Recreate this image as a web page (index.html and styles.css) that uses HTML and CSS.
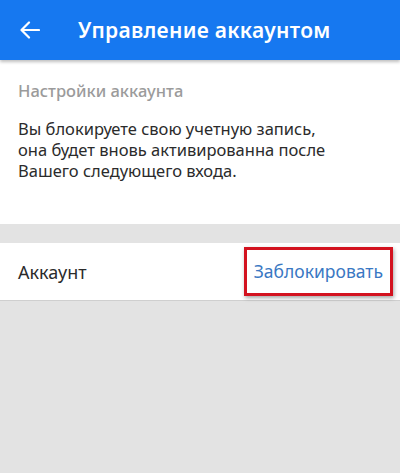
FILE: index.html
```html
<!DOCTYPE html>
<html lang="ru">
<head>
  <meta charset="UTF-8" />
  <meta name="viewport" content="width=device-width, initial-scale=1.0" />
  <title>Управление аккаунтом</title>
  <link rel="stylesheet" href="styles.css">
</head>
<body>
  <header class="topbar">
    <svg class="back" width="20" height="18" viewBox="0 0 20 18">
      <path d="M19 9H2M9 1.5L1.5 9L9 16.5" fill="none" stroke="#fff" stroke-width="2.2" stroke-linecap="round" stroke-linejoin="round"/>
    </svg>
    <h1>Управление аккаунтом</h1>
  </header>

  <section class="settings">
    <h2>Настройки аккаунта</h2>
    <p>Вы блокируете свою учетную запись,<br />она будет вновь активированна после<br />Вашего следующего входа.</p>
  </section>

  <div class="row">
    <span class="label">Аккаунт</span>
    <a class="action" href="#">Заблокировать</a>
  </div>
</body>
</html>
```

FILE: styles.css
```css
body {
  margin: 0;
  height: 473px;
  background: #e3e3e3;
  font-family: "Noto Sans", sans-serif;
  overflow: hidden;
}
.topbar {
  height: 60px;
  background: #1678f0;
  display: flex;
  align-items: center;
  padding-left: 20px;
  box-shadow: 0 2px 3px rgba(0, 0, 0, 0.25);
  position: relative;
}
.back {
  flex: none;
}
.topbar h1 {
  margin: 0 0 0 38px;
  color: white;
  font-size: 21px;
  font-weight: 600;
  letter-spacing: 0.3px;
}
.settings {
  background: white;
  padding: 19px 18px 40px;
  height: 164px;
  box-sizing: border-box;
}
.settings h2 {
  margin: 0;
  font-size: 16.5px;
  font-weight: 500;
  color: #9b9b9b;
}
.settings p {
  margin: 16px 0 0;
  font-size: 16.5px;
  line-height: 21px;
  color: #2b2b2b;
}
.row {
  margin-top: 19px;
  height: 57px;
  background: white;
  border-bottom: 1px solid #cfcfcf;
  display: flex;
  align-items: center;
  justify-content: space-between;
  padding: 0 7px 0 18px;
}
.label {
  font-size: 18px;
  color: #2b2b2b;
}
.action {
  font-size: 17.5px;
  color: #3a78c3;
  text-decoration: none;
  border: 3px solid #d3121f;
  padding: 9px 7px 10px 7px;
  box-shadow: 1px 2px 4px rgba(0, 0, 0, 0.35);
}
```
